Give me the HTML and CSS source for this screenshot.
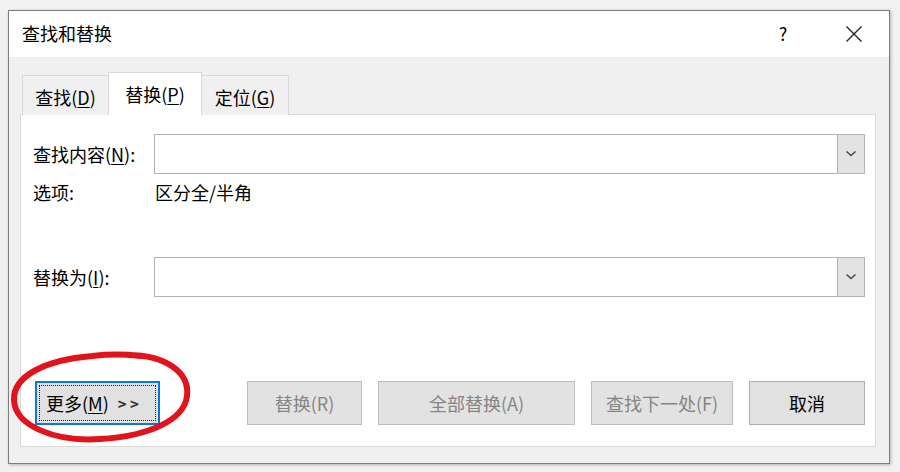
FILE: index.html
```html
<!DOCTYPE html>
<html lang="zh-CN">
<head>
<meta charset="utf-8">
<title>查找和替换</title>
<link rel="stylesheet" href="styles.css">
</head>
<body>
<div class="dialog">
  <div class="titlebar">
    <span class="title">查找和替换</span>
    <span class="help">?</span>
    <span class="close">
      <svg width="18" height="18" viewBox="0 0 18 18"><path d="M1.5 1.5 L16.5 16.5 M16.5 1.5 L1.5 16.5" stroke="#222" stroke-width="1.4" fill="none"/></svg>
    </span>
  </div>
  <div class="content">
    <div class="tabs">
      <div class="tab tab-find">查找(<u>D</u>)</div>
      <div class="tab tab-replace active">替换(<u>P</u>)</div>
      <div class="tab tab-goto">定位(<u>G</u>)</div>
    </div>
    <div class="panel">
      <div class="row field-row">
        <label class="label">查找内容(<u>N</u>):</label>
        <div class="combo">
          <div class="combo-input"></div>
          <div class="combo-btn"><svg width="12" height="8" viewBox="0 0 12 8"><path d="M1.5 1.5 L6 5.5 L10.5 1.5" stroke="#4a4a4a" stroke-width="1.6" fill="none"/></svg></div>
        </div>
      </div>
      <div class="row options-row">
        <span class="label">选项:</span>
        <span class="value">区分全/半角</span>
      </div>
      <div class="row field-row replace-row">
        <label class="label">替换为(<u>I</u>):</label>
        <div class="combo">
          <div class="combo-input"></div>
          <div class="combo-btn"><svg width="12" height="8" viewBox="0 0 12 8"><path d="M1.5 1.5 L6 5.5 L10.5 1.5" stroke="#4a4a4a" stroke-width="1.6" fill="none"/></svg></div>
        </div>
      </div>
      <div class="buttons">
        <button class="btn btn-more">更多(<u>M</u>) <span class="arrows">&gt; &gt;</span></button>
        <div class="btn-group">
          <button class="btn disabled btn-replace">替换(R)</button>
          <button class="btn disabled btn-all">全部替换(A)</button>
          <button class="btn disabled btn-next">查找下一处(F)</button>
          <button class="btn btn-cancel">取消</button>
        </div>
      </div>
    </div>
  </div>
</div>
<svg class="annotation" width="900" height="472" viewBox="0 0 900 472">
  <path d="M128 355 C 165 355, 190 372, 187 396 C 184 420, 150 436, 100 439 C 55 442, 15 426, 14 400 C 13 376, 45 360, 92 356 C 110 354, 125 354, 140 356" stroke="#e3131b" stroke-width="6" fill="none" stroke-linecap="round" stroke-linejoin="round"/>
</svg>
</body>
</html>
```
FILE: styles.css
```css
* { box-sizing: border-box; }
html, body { margin: 0; padding: 0; }
body {
  width: 900px;
  height: 472px;
  background: #f1f1f1;
  font-family: "Noto Sans CJK SC", "Liberation Sans", sans-serif;
  font-size: 18px;
  color: #000;
  position: relative;
  overflow: hidden;
}
u { text-decoration: underline; text-underline-offset: 2px; text-decoration-thickness: 1px; }

.dialog {
  margin: 10px 0 0 8px;
  width: 882px;
  height: 454px;
  border: 1px solid #7c7c7c;
  background: #f0f0f0;
  box-shadow: 1px 1px 3px rgba(0,0,0,0.25);
  display: flex;
  flex-direction: column;
}

.titlebar {
  height: 46px;
  background: #fff;
  display: flex;
  align-items: center;
  padding-left: 13px;
  line-height: 1;
}
.title { flex: 1; margin-top: -2px; }
.help { width: 20px; text-align: center; margin-right: 52px; font-size: 18px; margin-top: -2px; }
.close { display: flex; width: 18px; height: 18px; margin-right: 26px; margin-top: -1px; }

.content {
  flex: 1;
  padding: 15px 13px 0 11px;
}

.tabs {
  display: flex;
  align-items: flex-end;
  padding-left: 2px;
  margin-bottom: -1px;
  position: relative;
  z-index: 1;
}
.tab {
  height: 40px;
  border: 1px solid #d9d9d9;
  border-bottom: none;
  background: #f0f0f0;
  display: flex;
  align-items: center;
  justify-content: center;
  line-height: 1;
  padding-top: 3px;
}
.tab + .tab { border-left: none; }
.tab.active {
  height: 43px;
  background: #fff;
  border-left: 1px solid #d9d9d9;
  padding-top: 6px;
  padding-bottom: 6px;
}
.tab.active + .tab { border-left: none; }
.tab-find { width: 86px; border-right: none; }
.tab-replace { width: 94px; }
.tab-goto { width: 87px; }

.panel {
  height: 333px;
  background: #fff;
  border: 1px solid #dadada;
  padding: 19px 10px 0 12px;
  display: flex;
  flex-direction: column;
}

.row {
  display: grid;
  grid-template-columns: 121px 1fr;
  align-items: center;
  line-height: 1;
}
.field-row { height: 40px; }
.options-row { height: 26px; margin-top: 5px; }
.options-row .value { padding-left: 1px; }
.replace-row { margin-top: 52px; }

.combo {
  height: 40px;
  border: 1px solid #b3b3b3;
  display: flex;
  background: #fff;
}
.combo-input { flex: 1; }
.combo-btn {
  width: 27px;
  background: #e3e3e3;
  border-left: 1px solid #b0b0b0;
  display: flex;
  align-items: center;
  justify-content: center;
}

.buttons {
  margin-top: 84px;
  display: flex;
  justify-content: space-between;
  align-items: center;
}
.btn-group { display: flex; gap: 16px; }
.btn {
  height: 44px;
  font-family: inherit;
  font-size: 18px;
  line-height: 1;
  background: #e1e1e1;
  border: 1px solid #adadad;
  color: #000;
  padding: 0;
  display: flex;
  align-items: center;
  justify-content: center;
}
.btn.disabled {
  color: #858585;
  border-color: #bdbdbd;
  background: #e2e2e2;
}
.btn-more {
  width: 125px;
  margin-left: 2px;
  border: 2px solid #0a78d7;
  outline: 1px dotted #222;
  outline-offset: -5px;
  justify-content: flex-start;
  padding-left: 9px;
}
.arrows { margin-left: 9px; font-size: 15px; font-weight: bold; color: #333; }
.btn-replace { width: 115px; }
.btn-all { width: 197px; }
.btn-next { width: 142px; }
.btn-cancel { width: 116px; }

.annotation {
  position: absolute;
  left: 0;
  top: 0;
  pointer-events: none;
}
```
